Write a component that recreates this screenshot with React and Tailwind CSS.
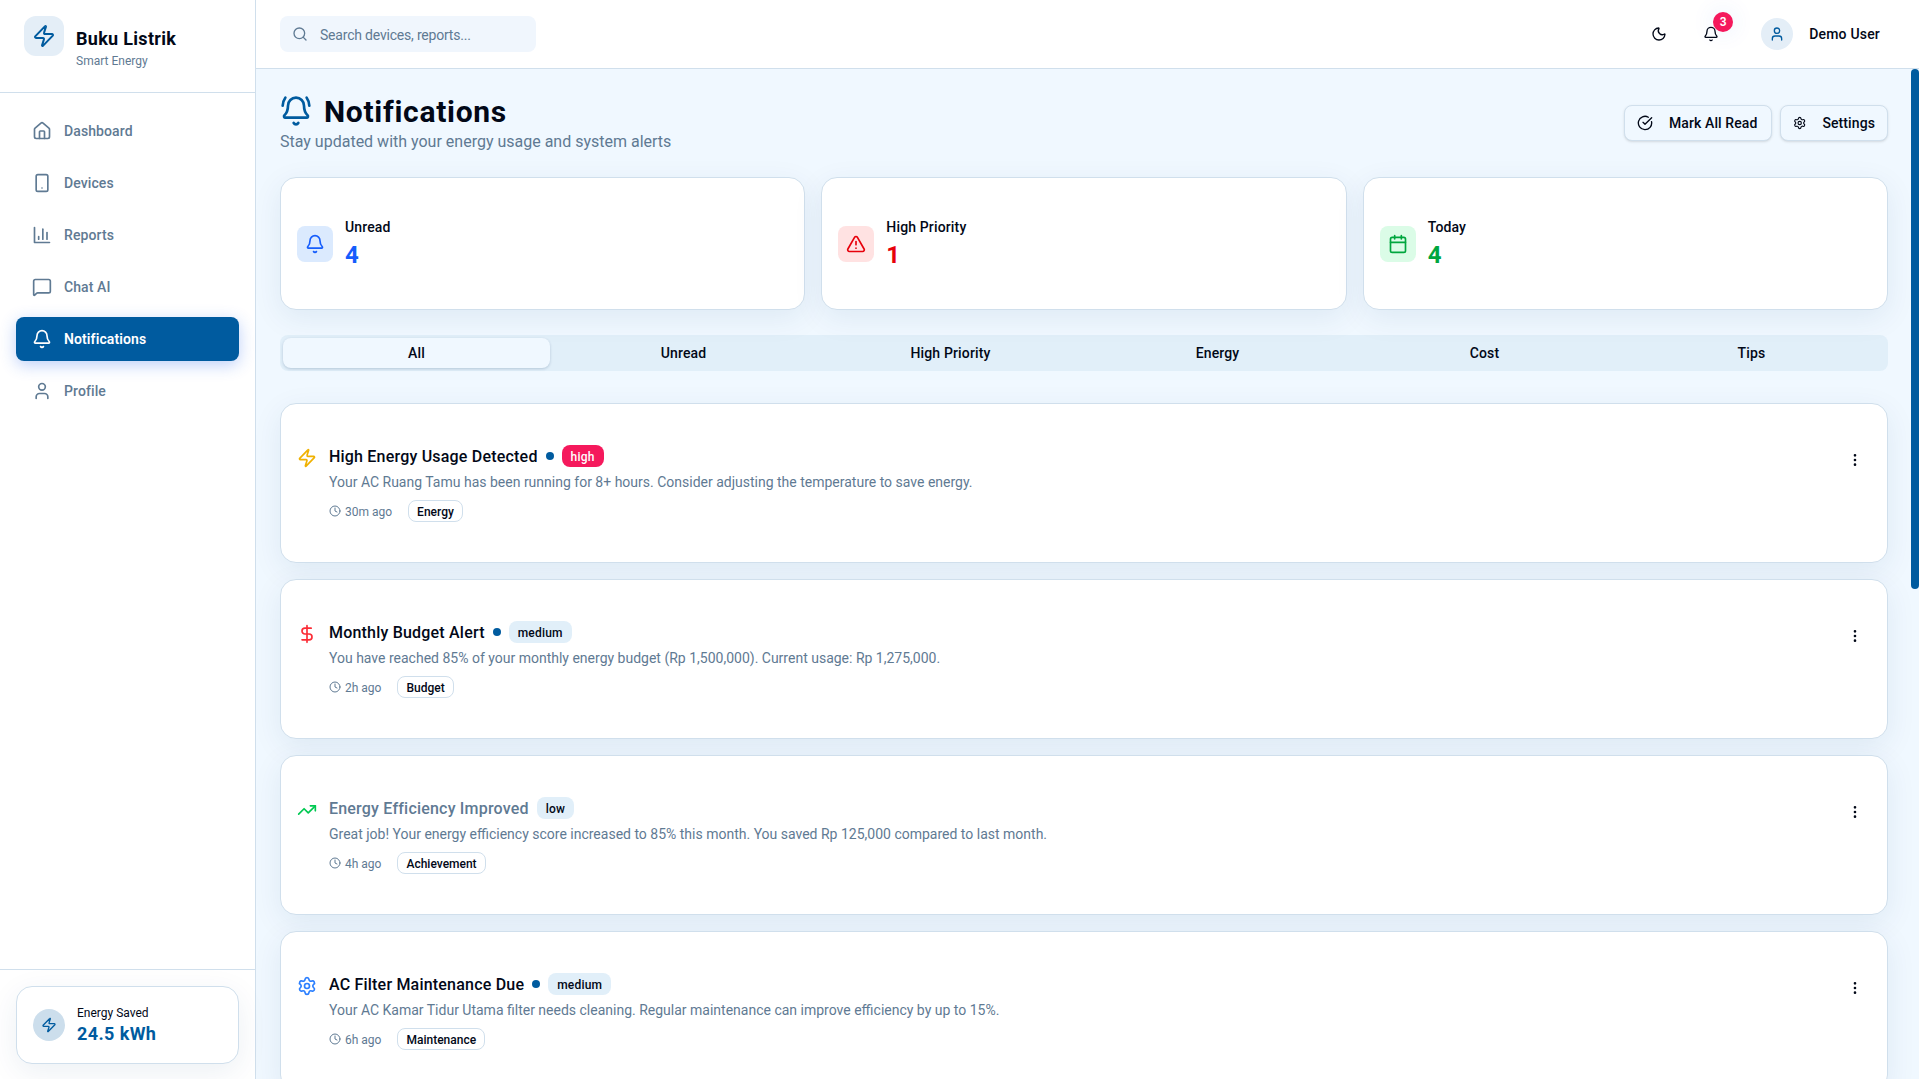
import React from 'react';
import {
  House, Smartphone, MessageSquare, Bell, BellRing, User, Zap, Search, Moon,
  CircleCheckBig, Settings, TriangleAlert, Calendar, DollarSign, TrendingUp, Clock, EllipsisVertical,
} from 'lucide-react';

// square-cornered axis with short, tall, mid bars
const BarsIcon = ({ size = 20 }) => (
  <svg width={size} height={size} viewBox="0 0 24 24" fill="none" stroke="currentColor" strokeWidth="2" strokeLinecap="round" strokeLinejoin="round">
    <path d="M3 3v18h18" />
    <path d="M18 17V9" />
    <path d="M13 17V5" />
    <path d="M8 17v-3" />
  </svg>
);

const navItems = [
  { label: 'Dashboard', icon: House },
  { label: 'Devices', icon: Smartphone },
  { label: 'Reports', icon: BarsIcon },
  { label: 'Chat AI', icon: MessageSquare },
  { label: 'Notifications', icon: Bell, active: true },
  { label: 'Profile', icon: User },
];

const stats = [
  { label: 'Unread', value: 4, icon: Bell, box: 'bg-blue-100', icolor: 'text-blue-600', vcolor: 'text-blue-600' },
  { label: 'High Priority', value: 1, icon: TriangleAlert, box: 'bg-red-100', icolor: 'text-red-600', vcolor: 'text-red-600' },
  { label: 'Today', value: 4, icon: Calendar, box: 'bg-green-100', icolor: 'text-green-600', vcolor: 'text-green-600' },
];

const tabs = ['All', 'Unread', 'High Priority', 'Energy', 'Cost', 'Tips'];

const notifications = [
  { title: 'High Energy Usage Detected', unread: true, priority: 'high', icon: Zap, color: 'text-yellow-500', text: 'Your AC Ruang Tamu has been running for 8+ hours. Consider adjusting the temperature to save energy.', time: '30m ago', tag: 'Energy' },
  { title: 'Monthly Budget Alert', unread: true, priority: 'medium', icon: DollarSign, color: 'text-red-500', text: 'You have reached 85% of your monthly energy budget (Rp 1,500,000). Current usage: Rp 1,275,000.', time: '2h ago', tag: 'Budget' },
  { title: 'Energy Efficiency Improved', unread: false, priority: 'low', icon: TrendingUp, color: 'text-green-500', text: 'Great job! Your energy efficiency score increased to 85% this month. You saved Rp 125,000 compared to last month.', time: '4h ago', tag: 'Achievement' },
  { title: 'AC Filter Maintenance Due', unread: true, priority: 'medium', icon: Settings, color: 'text-blue-500', text: 'Your AC Kamar Tidur Utama filter needs cleaning. Regular maintenance can improve efficiency by up to 15%.', time: '6h ago', tag: 'Maintenance' },
];

const cardShadow = 'shadow-[0_8px_30px_rgba(0,60,120,0.08)]';

const Sidebar = () => (
  <aside className="w-[256px] shrink-0 h-full flex flex-col bg-white border-r border-[#d0dfec]">
    <div className="h-[93px] shrink-0 border-b border-[#d0dfec] pl-6 pt-4 flex items-start gap-3">
      <div className="w-10 h-10 rounded-xl bg-[#e4eef7] flex items-center justify-center">
        <Zap size={24} className="text-[#005b9f]" />
      </div>
      <div className="pt-[12px]">
        <div className="text-[18px] leading-[22px] font-bold tracking-[0.3px] text-[#020817]">Buku Listrik</div>
        <div className="text-[12px] leading-[16px] mt-[3px] text-[#5f7a93]">Smart Energy</div>
      </div>
    </div>
    <nav className="flex-1 px-4 pt-4 flex flex-col gap-2">
      {navItems.map(({ label, icon: Icon, active }) => (
        <div
          key={label}
          className={active
            ? 'h-11 rounded-lg flex items-center gap-3 px-4 bg-[#005b9f] text-white text-[14px] font-semibold tracking-[0.1px] shadow-[0_4px_16px_rgba(37,99,235,0.3)]'
            : 'h-11 rounded-lg flex items-center gap-3 px-4 text-[#5f7a93] text-[14px] font-medium tracking-[0.1px]'}
        >
          <Icon size={20} />
          <span>{label}</span>
        </div>
      ))}
    </nav>
    <div className="h-[110px] shrink-0 border-t border-[#d0dfec] px-4 pt-4">
      <div className={`h-[78px] rounded-2xl border border-[#d0dfec] bg-white flex items-center gap-3 px-4 ${cardShadow}`}>
        <div className="w-8 h-8 rounded-full bg-[#ccdeec] flex items-center justify-center">
          <Zap size={16} className="text-[#005b9f]" />
        </div>
        <div>
          <div className="text-[12px] leading-[16px] text-[#020817]">Energy Saved</div>
          <div className="text-[18px] leading-[24px] pt-[1px] font-bold tracking-[0.4px] text-[#005b9f]">24.5 kWh</div>
        </div>
      </div>
    </div>
  </aside>
);

const Header = () => (
  <header className="h-[69px] shrink-0 bg-white border-b border-[#d0dfec] flex items-center justify-between pl-6 pr-[39px]">
    <div className="w-[256px] h-9 rounded-lg bg-[#f0f6fd] flex items-center gap-3 px-3 text-[#5f7a93]">
      <Search size={16} />
      <span className="text-[14px] tracking-[-0.2px] pt-[2px]">Search devices, reports...</span>
    </div>
    <div className="flex items-center">
      <Moon size={16} className="text-[#020817]" />
      <div className="relative ml-[36px]">
        <Bell size={16} className="text-[#020817]" />
        <span className="absolute -top-[14px] left-[10px] w-5 h-5 rounded-full bg-[#f5195c] text-white text-[12px] font-semibold flex items-center justify-center shadow-[0_0_24px_rgba(37,99,235,0.12)]">3</span>
      </div>
      <div className="ml-[42px] w-8 h-8 rounded-full bg-[#e4eef7] flex items-center justify-center">
        <User size={16} className="text-[#005b9f]" />
      </div>
      <span className="ml-4 text-[14px] font-medium tracking-[0.2px] text-[#020817]">Demo User</span>
    </div>
  </header>
);

const StatCard = ({ label, value, icon: Icon, box, icolor, vcolor }) => (
  <div className={`flex-1 h-[133px] rounded-2xl border border-[#d0dfec] bg-white flex items-center gap-3 px-4 ${cardShadow}`}>
    <div className={`w-9 h-9 rounded-lg flex items-center justify-center ${box}`}>
      <Icon size={20} className={icolor} />
    </div>
    <div className="pt-[1px]">
      <div className="text-[14px] leading-5 font-medium tracking-[0.15px] text-[#020817]">{label}</div>
      <div className={`text-[24px] leading-8 font-bold pt-[2px] ${vcolor}`}>{value}</div>
    </div>
  </div>
);

const NotificationCard = ({ title, unread, priority, icon: Icon, color, text, time, tag }) => (
  <div className={`h-[160px] shrink-0 rounded-2xl border border-[#d0dfec] bg-white flex items-start px-4 pt-[41px] ${cardShadow}`}>
    <Icon size={20} className={`mt-[3px] shrink-0 ${color}`} />
    <div className="flex-1 ml-[12px]">
      <div className="flex items-center gap-2 h-[22px]">
        <span className={`pt-[1px] text-[16px] font-medium tracking-[0.2px] ${unread ? 'text-[#020817]' : 'text-[#5f7a93]'}`}>{title}</span>
        {unread && <span className="w-2 h-2 rounded-full bg-[#005b9f]" />}
        <span className={`h-[22px] px-[9px] pt-[1px] rounded-lg flex items-center text-[12px] font-medium tracking-[0.2px] ${priority === 'high' ? 'bg-[#f5195c] text-white' : 'bg-[#e1eff9] text-[#020817]'}`}>{priority}</span>
      </div>
      <p className="mt-[5px] text-[14px] leading-5 text-[#5f7a93]">{text}</p>
      <div className="mt-[8px] flex items-center gap-4">
        <span className="flex items-center gap-1 text-[12px] text-[#5f7a93]">
          <Clock size={12} />
          <span className="pt-[1px]">{time}</span>
        </span>
        <span className="h-[22px] px-2 pt-[1px] rounded-lg border border-[#d0dfec] flex items-center text-[12px] font-medium text-[#020817]">{tag}</span>
      </div>
    </div>
    <EllipsisVertical size={16} className="mt-[7px] mr-2 shrink-0 text-[#020817]" />
  </div>
);

const App = () => (
  <div className="h-screen flex overflow-hidden bg-[#f0f8ff] font-['Roboto',sans-serif]">
    <Sidebar />
    <div className="flex-1 min-w-0 flex flex-col">
      <Header />
      <div className="relative flex-1 min-h-0">
        <main className="h-full overflow-hidden pl-6 pr-[31px] pt-6">
          <div className="flex items-start justify-between h-[84px]">
            <div>
              <div className="flex items-center gap-3 h-[36px]">
                <BellRing size={32} className="text-[#005b9f]" />
                <h1 className="pt-[2px] text-[30px] leading-9 font-bold tracking-[0.7px] text-[#020817]">Notifications</h1>
              </div>
              <p className="pt-[1px] text-[16px] leading-6 text-[#5f7a93]">Stay updated with your energy usage and system alerts</p>
            </div>
            <div className="flex items-center gap-2 pt-3">
              <button className="w-[148px] h-9 px-3 rounded-lg border border-[#d0dfec] bg-[#f0f8ff] flex items-center gap-4 text-[14px] font-medium tracking-[0.1px] text-[#020817] shadow-sm">
                <CircleCheckBig size={16} />
                Mark All Read
              </button>
              <button className="w-[108px] h-9 px-3 rounded-lg border border-[#d0dfec] bg-[#f0f8ff] flex items-center gap-4 text-[14px] font-medium tracking-[0.1px] text-[#020817] shadow-sm">
                <Settings size={16} />
                Settings
              </button>
            </div>
          </div>
          <div className="flex gap-4">
            {stats.map((s) => <StatCard key={s.label} {...s} />)}
          </div>
          <div className="mt-[25px] h-9 rounded-lg bg-[#e1eff9] flex items-center p-[3px]">
            {tabs.map((t, i) => (
              <div key={t} className={`flex-1 h-[30px] rounded-lg flex items-center justify-center text-[14px] font-medium tracking-[0.15px] text-[#020817] ${i === 0 ? 'bg-[#f0f8ff] shadow-[0_1px_3px_rgba(0,40,90,0.2)]' : ''}`}>{t}</div>
            ))}
          </div>
          <div className="mt-[32px] flex flex-col gap-4">
            {notifications.map((n) => <NotificationCard key={n.title} {...n} />)}
          </div>
        </main>
        <div className="absolute right-0 top-0 w-2 h-[520px] rounded-full bg-[#005b9f]" />
      </div>
    </div>
  </div>
);

export default App;
